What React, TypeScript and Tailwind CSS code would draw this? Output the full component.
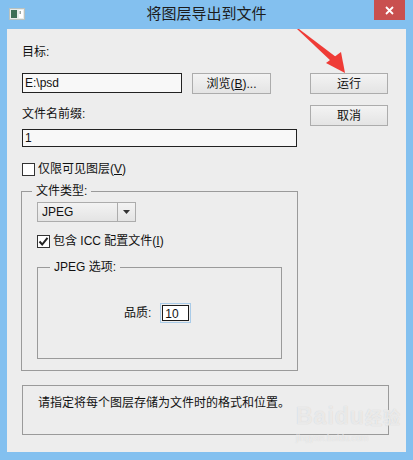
import type { ReactNode } from "react";

function Btn({ children, className = "" }: { children: ReactNode; className?: string }) {
  return (
    <div
      className={`flex h-[21px] items-center justify-center border border-[#acacac] bg-linear-to-b from-[#f3f3f3] to-[#e4e4e4] text-[12px] text-[#111] ${className}`}
    >
      {children}
    </div>
  );
}

function CheckBox({ checked = false }: { checked?: boolean }) {
  return (
    <div className="flex h-[13px] w-[13px] shrink-0 items-center justify-center border border-[#333] bg-white">
      {checked && (
        <svg width="11" height="11" viewBox="0 0 11 11">
          <path d="M1.5 5.5 L4.2 8.5 L9.5 1.8" fill="none" stroke="#222" strokeWidth="2" />
        </svg>
      )}
    </div>
  );
}

export default function App() {
  return (
    <div className="relative flex h-[460px] w-[413px] flex-col overflow-hidden bg-[#83c0ef] font-['Liberation_Sans','Noto_Sans_CJK_SC',sans-serif] text-[12px] text-[#111]">
      {/* title bar */}
      <div className="grid h-[29px] grid-cols-[1fr_auto_1fr] items-start">
        <div className="pl-[9px] pt-[8px]">
          <svg width="16" height="12" viewBox="0 0 16 12">
            <rect x="0.5" y="0.5" width="15" height="11" fill="#e8ecea" stroke="#b9c2c0" />
            <rect x="2" y="2" width="6" height="8" fill="#3d6e55" />
            <rect x="10" y="2" width="4" height="8" fill="#ffffff" />
            <rect x="10.5" y="3" width="1.5" height="3" fill="#9aa6a2" />
          </svg>
        </div>
        <div className="pt-[4px] text-[15px] leading-[20px] text-[#1c1c1c]">将图层导出到文件</div>
        <div className="flex justify-end pr-[8px]">
          <div className="flex h-[20px] w-[31px] items-center justify-center bg-[#c9504f]">
            <svg width="9" height="9" viewBox="0 0 9 9">
              <path d="M1 1 L8 8 M8 1 L1 8" stroke="#fff" strokeWidth="1.8" />
            </svg>
          </div>
        </div>
      </div>

      {/* client area */}
      <div className="mx-[7px] mb-[8px] flex-1 bg-[#ededed] pl-[15px]">
        <div className="flex">
          <div className="w-[275px]">
            <div className="mt-[15px] h-[16px] leading-[16px]">目标:</div>
            <div className="mt-[13px] flex items-start">
              <div className="h-[20px] w-[160px] border border-[#222] bg-[#f8f8f8] px-[2px] leading-[18px]">E:\psd</div>
              <Btn className="ml-[10px] w-[79px]">
                浏览(<span className="underline">B</span>)...
              </Btn>
            </div>
            <div className="mt-[12px] h-[16px] leading-[16px]">文件名前缀:</div>
            <div className="mt-[7px] h-[18px] w-[275px] border border-[#222] bg-[#f8f8f8] px-[2px] leading-[16px]">1</div>
            <div className="mt-[16px] flex h-[13px] items-center gap-[3px]">
              <CheckBox />
              <span className="leading-[13px]">
                仅限可见图层(<span className="underline">V</span>)
              </span>
            </div>

            <fieldset className="-ml-px mt-[7px] w-[277px] border border-[#9a9a9a] pb-[11px] pl-[15px]">
              <legend className="-ml-[5px] h-[16px] px-[4px] leading-[16px]">文件类型:</legend>
              <div className="mt-[3px] flex h-[20px] w-[99px] border border-[#acacac] bg-linear-to-b from-[#f3f3f3] to-[#e4e4e4]">
                <div className="flex-1 pl-[4px] leading-[18px]">JPEG</div>
                <div className="flex w-[18px] items-center justify-center border-l border-[#acacac]">
                  <svg width="7" height="4" viewBox="0 0 7 4">
                    <path d="M0 0 L7 0 L3.5 4 Z" fill="#333" />
                  </svg>
                </div>
              </div>
              <div className="mt-[13px] flex h-[13px] items-center gap-[3px]">
                <CheckBox checked />
                <span className="leading-[13px]">
                  包含 ICC 配置文件(<span className="underline">I</span>)
                </span>
              </div>
              <fieldset className="mt-[11px] w-[245px] border border-[#9a9a9a] pb-[35px]">
                <legend className="ml-[12px] h-[16px] px-[4px] leading-[16px]">JPEG 选项:</legend>
                <div className="ml-[86px] mt-[28px] flex items-center gap-[9px]">
                  <span>品质:</span>
                  <div className="h-[20px] w-[31px] border border-[#a9cbe8] p-px">
                    <div className="h-full w-full border border-[#1a1a1a] bg-white pl-[2px] leading-[16px]">10</div>
                  </div>
                </div>
              </fieldset>
            </fieldset>
          </div>

          <div className="ml-[13px] w-[78px] pt-[44px]">
            <Btn className="w-[78px]">运行</Btn>
            <Btn className="mt-[11px] w-[78px]">取消</Btn>
          </div>
        </div>

        <div className="mt-[14px] h-[50px] w-[367px] border border-[#9a9a9a] pl-[15px] pt-[9px] leading-[16px]">
          请指定将每个图层存储为文件时的格式和位置。
        </div>
      </div>

      {/* red annotation arrow */}
      <svg className="pointer-events-none absolute left-0 top-0" width="413" height="460" viewBox="0 0 413 460">
        <polygon points="297,29 299,29 336,57 332,62" fill="#ef3b36" />
        <polygon points="326,63 341,52 345,73" fill="#ef3b36" />
      </svg>

      {/* watermark */}
      <div className="pointer-events-none absolute left-[296px] top-[403px] flex flex-col items-start">
        <div className="text-[23px] font-bold leading-[26px] tracking-[1px] text-white/60 [text-shadow:0_0_1px_#c8c8c8]">
          Baidu<span className="text-[17px]">经验</span>
        </div>
        <div className="text-[9px] leading-[12px] text-white/50 [text-shadow:0_0_1px_#d0d0d0]">jingyan.baidu.com</div>
      </div>
    </div>
  );
}
